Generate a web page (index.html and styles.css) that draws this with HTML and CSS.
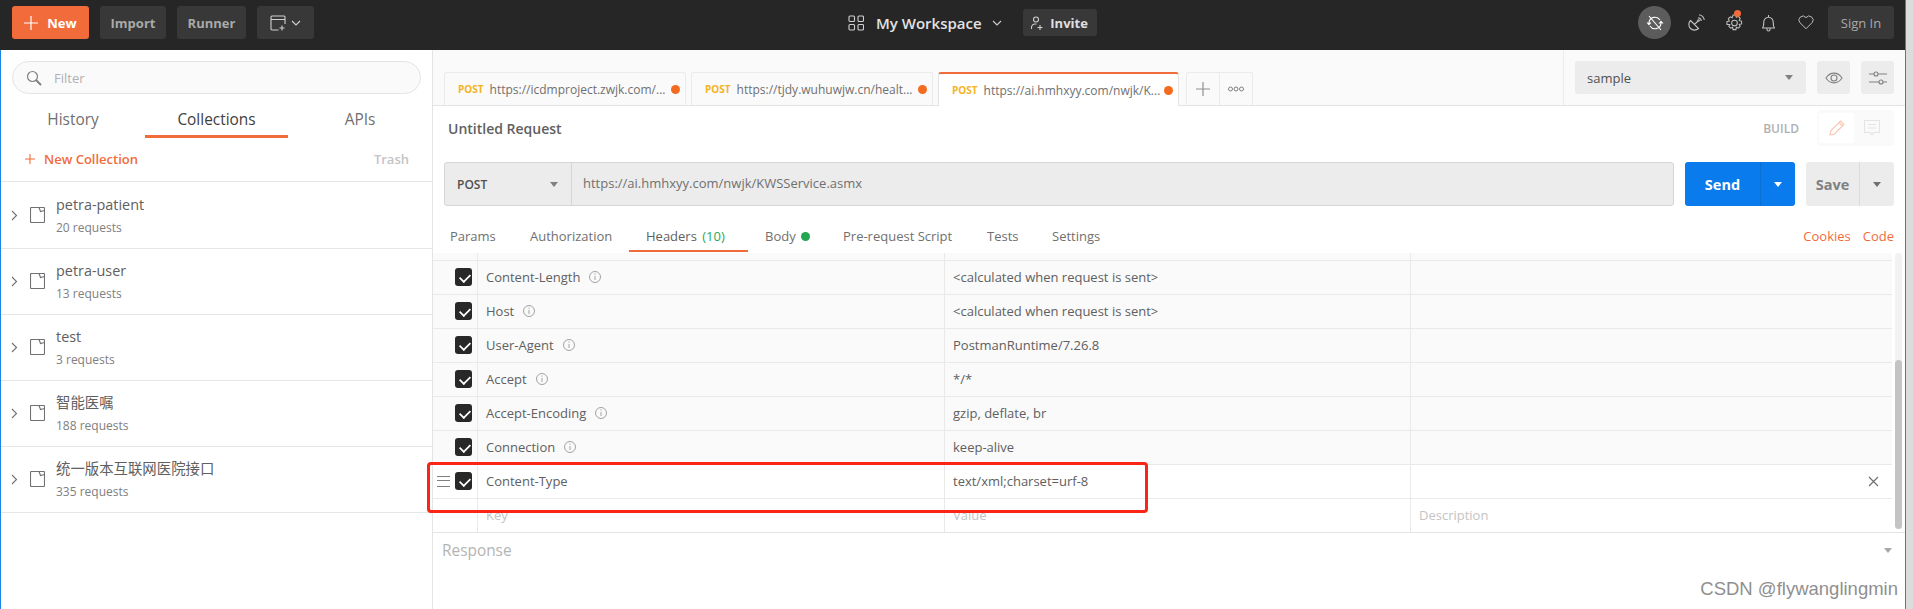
FILE: index.html
```html
<!DOCTYPE html>
<html lang="en">
<head>
<meta charset="utf-8">
<title>Postman</title>
<link rel="stylesheet" href="styles.css">
</head>
<body>
<div class="window">
  <header class="topbar">
    <div class="top-left">
      <button class="btn-new"><svg class="ic14" viewBox="0 0 14 14"><path d="M7 0v14M0 7h14"/></svg><span>New</span></button>
      <button class="btn-dark btn-import">Import</button>
      <button class="btn-dark btn-runner">Runner</button>
      <button class="btn-dark btn-win"><svg width="16" height="16" viewBox="0 0 16 16" class="ln"><path d="M8.500 15H2a1 1 0 0 1-1-1V2a1 1 0 0 1 1-1h12a1 1 0 0 1 1 1v7M1 4.500h14M12 10.500v5M9.500 13h5"/></svg><svg width="10" height="6" viewBox="0 0 10 6" class="ln"><path d="M1 1l4 4 4-4"/></svg></button>
    </div>
    <div class="top-center">
      <svg width="16" height="16" viewBox="0 0 16 16" class="ln"><rect x="1" y="1" width="5.500" height="5.500" rx="1"/><rect x="10" y="1" width="5.500" height="5.500" rx="1"/><rect x="1" y="9.500" width="5.500" height="5.500" rx="1"/><rect x="10" y="9.500" width="5.500" height="5.500" rx="1"/></svg>
      <span class="ws">My Workspace</span>
      <svg width="10" height="6" viewBox="0 0 10 6" class="ln"><path d="M1 1l4 4 4-4"/></svg>
      <button class="btn-invite"><svg width="12" height="14" viewBox="0 0 12 14" class="ln"><circle cx="5" cy="3.500" r="2.500"/><path d="M.5 13v-2a3.500 3.500 0 0 1 3-3h2M9 9v5M6.500 11.500h5"/></svg><span>Invite</span></button>
    </div>
    <div class="top-right">
      <span class="sync"><svg width="18" height="16" viewBox="0 0 18 16" class="ln2"><path d="M3 7.500A6 6 0 0 1 14 5M15 8.500A6 6 0 0 1 4 11M3 1l12 14"/><path class="solid" d="M.5 7.500h5L3 10.500zM12.500 8.500h5L15 5.500z"/></svg></span>
      <svg class="tic tic-sat" width="17" height="17" viewBox="0 0 17 17"><path d="M2.500 6.500l8 8A5.600 5.600 0 0 1 2.500 6.500zM6.500 10.500l3.500-3.500M10 3.800A3.500 3.500 0 0 1 13.300 7M11 .8A6.500 6.500 0 0 1 16.300 6"/><circle cx="10.500" cy="6.500" r=".8"/></svg>
      <span class="gear"><svg class="tic" width="17" height="18" viewBox="0 0 18 19"><path d="M7.500 1h3l.5 2.500 2-1 2 2-1 2.500 2.500.5v3l-2.500.5 1 2-2 2-2-1-.5 2.500h-3l-.5-2.500-2 1-2-2 1-2L1 11V8l2.500-.5-1-2.500 2-2 2 1z"/><circle cx="9" cy="9.500" r="3"/></svg><i class="gear-dot"></i></span>
      <svg class="tic tic-bell" width="13" height="18" viewBox="0 0 13 18"><path d="M.5 14c1.300-1.500 1.300-3 1.300-6a4.700 4.700 0 0 1 9.400 0c0 3 0 4.500 1.300 6zM6.500 1v2M5 14.500v1a1.500 1.500 0 0 0 3 0v-1"/></svg>
      <svg class="tic tic-heart" width="16" height="15" viewBox="0 0 18 16"><path d="M9 15L2 8a4.400 4.400 0 0 1 7-5.500A4.400 4.400 0 0 1 16 8z"/></svg>
      <button class="btn-dark btn-sign">Sign In</button>
    </div>
  </header>

  <div class="body">
    <aside class="sidebar">
      <div class="filter-wrap">
        <div class="filter">
          <svg width="16" height="16" viewBox="0 0 16 16" class="sv"><circle cx="6.500" cy="6.500" r="5"/><path d="M10 10l5 5" stroke-width="2"/></svg>
          <span>Filter</span>
        </div>
      </div>
      <nav class="side-tabs">
        <span class="side-tab side-tab-h">History</span>
        <span class="side-tab side-tab-c">Collections</span>
        <span class="side-tab side-tab-a">APIs</span>
      </nav>
      <div class="side-actions">
        <span class="new-coll"><svg width="10" height="10" viewBox="0 0 10 10"><path d="M5 0v10M0 5h10"/></svg>New Collection</span>
        <span class="trash">Trash</span>
      </div>
      <ul class="colls">
        <li class="coll"><svg class="chev" width="7" height="11" viewBox="0 0 7 11"><path d="M1 1l4.500 4.500L1 10"/></svg><svg class="folder" width="15" height="16" viewBox="0 0 15 16"><rect x=".5" y=".5" width="14" height="15" rx="1"/><path d="M9 .5l1.500 4 4-1"/></svg><div><div class="c-name">petra-patient</div><div class="c-sub">20 requests</div></div></li>
        <li class="coll"><svg class="chev" width="7" height="11" viewBox="0 0 7 11"><path d="M1 1l4.500 4.500L1 10"/></svg><svg class="folder" width="15" height="16" viewBox="0 0 15 16"><rect x=".5" y=".5" width="14" height="15" rx="1"/><path d="M9 .5l1.500 4 4-1"/></svg><div><div class="c-name">petra-user</div><div class="c-sub">13 requests</div></div></li>
        <li class="coll"><svg class="chev" width="7" height="11" viewBox="0 0 7 11"><path d="M1 1l4.500 4.500L1 10"/></svg><svg class="folder" width="15" height="16" viewBox="0 0 15 16"><rect x=".5" y=".5" width="14" height="15" rx="1"/><path d="M9 .5l1.500 4 4-1"/></svg><div><div class="c-name">test</div><div class="c-sub">3 requests</div></div></li>
        <li class="coll"><svg class="chev" width="7" height="11" viewBox="0 0 7 11"><path d="M1 1l4.500 4.500L1 10"/></svg><svg class="folder" width="15" height="16" viewBox="0 0 15 16"><rect x=".5" y=".5" width="14" height="15" rx="1"/><path d="M9 .5l1.500 4 4-1"/></svg><div><div class="c-name">智能医嘱</div><div class="c-sub">188 requests</div></div></li>
        <li class="coll"><svg class="chev" width="7" height="11" viewBox="0 0 7 11"><path d="M1 1l4.500 4.500L1 10"/></svg><svg class="folder" width="15" height="16" viewBox="0 0 15 16"><rect x=".5" y=".5" width="14" height="15" rx="1"/><path d="M9 .5l1.500 4 4-1"/></svg><div><div class="c-name">统一版本互联网医院接口</div><div class="c-sub">335 requests</div></div></li>
      </ul>
    </aside>

    <main class="main">
      <div class="tabbar">
        <div class="tabs">
          <div class="tab tab1"><b>POST</b><span>https://icdmproject.zwjk.com/...</span><i></i></div>
          <div class="tab tab2"><b>POST</b><span>https://tjdy.wuhuwjw.cn/healt...</span><i></i></div>
          <div class="tab tab3"><b>POST</b><span>https://ai.hmhxyy.com/nwjk/K...</span><i></i></div>
          <div class="tab-tools">
            <span class="tool-add"><svg width="14" height="14" viewBox="0 0 14 14"><path d="M7 0v14M0 7h14"/></svg></span>
            <span class="tool-more"><svg width="16" height="6" viewBox="0 0 16 6"><circle cx="2.500" cy="3" r="2"/><circle cx="8" cy="3" r="2"/><circle cx="13.500" cy="3" r="2"/></svg></span>
          </div>
        </div>
        <div class="env">
          <div class="env-select"><span>sample</span><i class="caret"></i></div>
          <span class="env-btn"><svg width="18" height="12" viewBox="0 0 18 12"><path d="M1 6c4-6.500 12-6.500 16 0-4 6.500-12 6.500-16 0z"/><circle cx="9" cy="6" r="3"/></svg></span>
          <span class="env-btn"><svg width="18" height="14" viewBox="0 0 18 14"><path d="M0 3h5M9 3h9M0 11h10M14 11h4"/><circle cx="7" cy="3" r="2"/><circle cx="12" cy="11" r="2"/></svg></span>
        </div>
      </div>

      <div class="req-head">
        <span class="req-title">Untitled Request</span>
        <div class="build">
          <span class="build-label">BUILD</span>
          <div class="build-group">
            <span class="bg-on"><svg width="16" height="16" viewBox="0 0 16 16"><path d="M1 15l1-4.500L11.500 1l3.500 3.500L5.500 14zM10 2.500L13.500 6"/></svg></span>
            <span class="bg-off"><svg width="16" height="16" viewBox="0 0 16 16"><path d="M.5.500h15v12h-6L8 15l-1.500-2.500h-6zM4 4.500h8M4 8h8"/></svg></span>
          </div>
        </div>
      </div>

      <div class="url-row">
        <div class="url-box">
          <div class="method"><span>POST</span><i class="caret"></i></div>
          <div class="url">https://ai.hmhxyy.com/nwjk/KWSService.asmx</div>
        </div>
        <div class="send"><span class="send-l">Send</span><span class="send-r"><i class="caret caret-w"></i></span></div>
        <div class="save"><span class="save-l">Save</span><span class="save-r"><i class="caret caret-d"></i></span></div>
      </div>

      <div class="req-tabs">
        <span class="rt rt-params">Params</span>
        <span class="rt rt-auth">Authorization</span>
        <span class="rt rt-on">Headers <em>(10)</em></span>
        <span class="rt rt-body">Body <i class="dot-g"></i></span>
        <span class="rt rt-pre">Pre-request Script</span>
        <span class="rt rt-tests">Tests</span>
        <span class="rt rt-set">Settings</span>
        <span class="links"><a>Cookies</a><a>Code</a></span>
      </div>

      <div class="table-wrap">
        <div class="table">
          <div class="row ro row-cut"><span class="c0"></span><span class="c1"></span><span class="c2"></span><span class="c3"></span></div>
          <div class="row ro"><span class="c0"><i class="chk"></i></span><span class="c1">Content-Length <svg class="info" viewBox="0 0 12 12"><circle cx="6" cy="6" r="5.500"/><path d="M6 5v4M6 2.500v1.200"/></svg></span><span class="c2">&lt;calculated when request is sent&gt;</span><span class="c3"></span></div>
          <div class="row ro"><span class="c0"><i class="chk"></i></span><span class="c1">Host <svg class="info" viewBox="0 0 12 12"><circle cx="6" cy="6" r="5.500"/><path d="M6 5v4M6 2.500v1.200"/></svg></span><span class="c2">&lt;calculated when request is sent&gt;</span><span class="c3"></span></div>
          <div class="row ro"><span class="c0"><i class="chk"></i></span><span class="c1">User-Agent <svg class="info" viewBox="0 0 12 12"><circle cx="6" cy="6" r="5.500"/><path d="M6 5v4M6 2.500v1.200"/></svg></span><span class="c2">PostmanRuntime/7.26.8</span><span class="c3"></span></div>
          <div class="row ro"><span class="c0"><i class="chk"></i></span><span class="c1">Accept <svg class="info" viewBox="0 0 12 12"><circle cx="6" cy="6" r="5.500"/><path d="M6 5v4M6 2.500v1.200"/></svg></span><span class="c2">*/*</span><span class="c3"></span></div>
          <div class="row ro"><span class="c0"><i class="chk"></i></span><span class="c1">Accept-Encoding <svg class="info" viewBox="0 0 12 12"><circle cx="6" cy="6" r="5.500"/><path d="M6 5v4M6 2.500v1.200"/></svg></span><span class="c2">gzip, deflate, br</span><span class="c3"></span></div>
          <div class="row ro"><span class="c0"><i class="chk"></i></span><span class="c1">Connection <svg class="info" viewBox="0 0 12 12"><circle cx="6" cy="6" r="5.500"/><path d="M6 5v4M6 2.500v1.200"/></svg></span><span class="c2">keep-alive</span><span class="c3"></span></div>
          <div class="row"><span class="c0"><span class="grip"></span><i class="chk"></i></span><span class="c1">Content-Type</span><span class="c2">text/xml;charset=urf-8</span><span class="c3"><svg class="x" width="11" height="11" viewBox="0 0 11 11"><path d="M1 1l9 9M10 1l-9 9"/></svg></span></div>
          <div class="row ph"><span class="c0"></span><span class="c1">Key</span><span class="c2">Value</span><span class="c3">Description</span></div>
        </div>
        <div class="scrollbar"><div class="track"><div class="thumb"></div></div></div>
      </div>

      <div class="response"><span>Response</span><i class="caret caret-l"></i></div>
      <div class="mark-wrap"><span class="mark">CSDN @flywanglingmin</span></div>
    </main>
  </div>
  <div class="redbox"></div>
</div>
</body>
</html>
```

FILE: styles.css
```css
* { box-sizing: border-box; }
html, body { margin: 0; padding: 0; }
body { width: 1913px; height: 609px; overflow: hidden; background: #dcdcdc; font-family: "Open Sans", "Noto Sans CJK SC", sans-serif; color: #505050; }
ul { list-style: none; margin: 0; padding: 0; }
button { font-family: inherit; border: 0; padding: 0; }
svg { display: block; flex: none; fill: none; }
.window { position: relative; width: 1906px; height: 609px; background: #fff; border-right: 1px solid #1b87e6; display: flex; flex-direction: column; }

.topbar { height: 50px; background: #262626; display: flex; align-items: center; justify-content: space-between; padding: 0 11px 5px 12px; flex: none; position: relative; }
.top-left { display: flex; align-items: center; gap: 11px; }
.btn-new { width: 77px; height: 33px; background: #f26b3a; border-radius: 3px; color: #fff; font-size: 13px; font-weight: 700; display: flex; align-items: center; justify-content: center; gap: 9px; }
.ic14 { width: 14px; height: 14px; stroke: #fff; stroke-width: 1.200; }
.btn-dark { height: 33px; background: #383838; border-radius: 3px; color: #a9a9a9; font-size: 13px; font-weight: 700; }
.btn-import { width: 66px; }
.btn-runner { width: 69px; }
.btn-win { width: 57px; display: flex; align-items: center; justify-content: center; gap: 5px; }
.ln { stroke: #d0d0d0; stroke-width: 1.100; }
.ln2 { stroke: #fff; stroke-width: 1.100; }
.solid { fill: #fff; stroke: none; }
.top-center { position: absolute; left: 848px; top: 9px; height: 27px; display: flex; align-items: center; }
.ws { color: #e2e2e2; font-size: 15px; font-weight: 600; margin: 0 10px 0 12px; }
.btn-invite { margin-left: 21px; width: 74px; height: 27px; border-radius: 3px; background: #383838; color: #e0e0e0; font-size: 13px; font-weight: 700; display: flex; align-items: center; justify-content: center; gap: 7px; }
.top-right { display: flex; align-items: center; }
.sync { width: 33px; height: 33px; border-radius: 50%; background: #5c5c5c; display: flex; align-items: center; justify-content: center; margin-right: 17px; }
.tic { stroke: #c0c0c0; stroke-width: 1.100; }
.tic-sat { margin-right: 21px; }
.tic-bell { margin-right: 23px; }
.tic-heart { margin-right: 14px; }
.gear { position: relative; margin-right: 19px; }
.gear-dot { position: absolute; top: -4px; left: 8px; width: 7px; height: 7px; border-radius: 50%; background: #f26b3a; }
.btn-sign { width: 66px; font-weight: 400; }

.body { flex: 1; display: flex; min-height: 0; }
.sidebar { width: 433px; flex: none; background: #fff; border-left: 1px solid #1b87e6; border-right: 1px solid #e4e4e4; display: flex; flex-direction: column; }
.filter-wrap { padding: 11px 11px 0 11px; }
.filter { height: 33px; border: 1px solid #e4e4e4; border-radius: 17px; background: #fafafa; display: flex; align-items: center; padding-left: 13px; gap: 12px; font-size: 13px; color: #b0b0b0; }
.sv { stroke: #808080; stroke-width: 1.200; }
.side-tabs { height: 44px; display: flex; font-size: 15.400px; color: #707070; }
.side-tab { height: 44px; padding-top: 10px; display: flex; align-items: center; justify-content: center; border-bottom: 3px solid transparent; }
.side-tab-h { width: 144px; }
.side-tab-c { width: 143px; color: #404040; border-bottom-color: #f26b3a; }
.side-tab-a { width: 144px; }
.side-actions { height: 44px; border-bottom: 1px solid #e6e6e6; display: flex; justify-content: space-between; align-items: center; padding: 0 23px 2px 24px; font-size: 13px; font-weight: 600; }
.new-coll { color: #f26b3a; display: flex; align-items: center; gap: 9px; }
.new-coll svg { stroke: #f26b3a; stroke-width: 1.100; }
.trash { color: #c4c4c4; }
.colls { padding-top: 1px; }
.coll { height: 66px; border-bottom: 1px solid #e6e6e6; display: flex; align-items: center; padding-bottom: 1px; }
.chev { margin-left: 10px; stroke: #707070; stroke-width: 1.100; }
.folder { margin-left: 12px; margin-right: 11px; stroke: #707070; stroke-width: 1.100; }
.c-name { font-size: 14.400px; line-height: 20px; color: #606060; }
.c-sub { font-size: 12px; line-height: 16px; margin-top: 5px; color: #808080; }

.main { flex: 1; min-width: 0; display: flex; flex-direction: column; position: relative; }
.tabbar { height: 56px; background: #fafafa; border-bottom: 1px solid #e4e4e4; display: flex; justify-content: space-between; flex: none; }
.tabs { display: flex; align-items: flex-end; padding-left: 11px; gap: 5px; height: 55px; }
.tab { height: 33px; width: 242px; background: #fafafa; border: 1px solid #ebebeb; border-bottom: 0; border-radius: 3px 3px 0 0; display: flex; align-items: center; padding-left: 13px; font-size: 12px; color: #707070; white-space: nowrap; position: relative; }
.tab b { color: #f5b324; font-size: 10px; font-weight: 700; margin-right: 6px; }
.tab span { flex: 1; }
.tab i { width: 9px; height: 9px; border-radius: 50%; background: #f26b1e; margin-right: 5px; }
.tab3 { background: #fff; border-top: 2px solid #f26b3a; border-color: #f26b3a #e4e4e4 #fff; margin-bottom: -1px; height: 34px; width: 241px; }
.tab-tools { display: flex; height: 33px; border: 1px solid #ebebeb; border-bottom: 0; border-radius: 3px 3px 0 0; margin-left: 2px; }
.tool-add, .tool-more { display: flex; align-items: center; justify-content: center; }
.tool-add { width: 33px; border-right: 1px solid #ebebeb; }
.tool-add svg { stroke: #909090; stroke-width: 1.200; }
.tool-more { width: 32px; }
.tool-more svg { stroke: #808080; stroke-width: 1; }
.env { width: 342px; flex: none; border-left: 1px solid #ececec; display: flex; align-items: flex-start; padding: 11px 0 0 11px; gap: 11px; }
.env-select { width: 231px; height: 33px; background: #ececec; border-radius: 3px; display: flex; align-items: center; justify-content: space-between; padding: 0 13px 0 12px; font-size: 13px; color: #505050; }
.env-btn { width: 33px; height: 33px; background: #ececec; border-radius: 3px; display: flex; align-items: center; justify-content: center; }
.env-btn svg { stroke: #808080; stroke-width: 1.100; }
.caret { display: block; width: 0; height: 0; border-left: 4.500px solid transparent; border-right: 4.500px solid transparent; border-top: 5px solid #808080; }
.caret-w { border-top-color: #fff; }
.caret-d { border-top-color: #707070; }
.caret-l { border-top-color: #a8a8a8; }

.req-head { height: 56px; display: flex; align-items: flex-start; justify-content: space-between; padding: 4px 11px 0 15px; flex: none; }
.req-title { font-size: 14px; font-weight: 600; line-height: 38px; color: #606060; }
.build { display: flex; align-items: center; }
.build-label { font-size: 12px; font-weight: 600; color: #b0b0b0; margin-right: 18px; }
.build-group { width: 77px; height: 36px; background: #fafafa; border-radius: 3px; display: flex; align-items: center; padding: 3px 2px; }
.bg-on, .bg-off { width: 35px; height: 30px; border-radius: 3px; display: flex; align-items: center; justify-content: center; }
.bg-on { background: #fff; }
.bg-on svg { stroke: #fac6b2; stroke-width: 1.100; }
.bg-off svg { stroke: #e4e4e4; stroke-width: 1.100; }

.url-row { height: 44px; display: flex; padding: 0 11px; gap: 11px; flex: none; }
.url-box { flex: 1; display: flex; background: #ececec; border: 1px solid #d6d6d6; border-radius: 3px; }
.method { width: 127px; border-right: 1px solid #d6d6d6; display: flex; align-items: center; justify-content: space-between; padding: 0 12px; font-size: 12px; font-weight: 600; color: #505050; }
.method .caret { margin-right: 1px; }
.url { flex: 1; line-height: 40px; padding-left: 11px; font-size: 13px; color: #707070; }
.send { width: 110px; background: #097bed; border-radius: 3px; display: flex; color: #fff; font-size: 14.500px; font-weight: 700; }
.send-l { width: 76px; display: flex; align-items: center; justify-content: center; border-right: 1px solid #0a6fd4; }
.send-r { flex: 1; display: flex; align-items: center; justify-content: center; }
.save { width: 88px; background: #ececec; border-radius: 3px; display: flex; color: #808080; font-size: 14.500px; font-weight: 700; }
.save-l { width: 54px; display: flex; align-items: center; justify-content: center; border-right: 1px solid #dcdcdc; }
.save-r { flex: 1; display: flex; align-items: center; justify-content: center; }

.req-tabs { height: 47px; display: flex; font-size: 13px; color: #707070; flex: none; position: relative; }
.rt { position: absolute; top: 20px; line-height: 20px; white-space: nowrap; }
.rt-params { left: 17px; }
.rt-auth { left: 97px; }
.rt-on { left: 196px; width: 119px; height: 26px; padding-left: 17px; color: #606060; border-bottom: 2px solid #f26b3a; }
.rt-on em { font-style: normal; color: #2ba85a; margin-left: 2px; }
.rt-body { left: 332px; display: flex; align-items: center; gap: 5px; }
.dot-g { width: 9px; height: 9px; border-radius: 50%; background: #26a650; }
.rt-pre { left: 410px; }
.rt-tests { left: 554px; }
.rt-set { left: 619px; }
.links { position: absolute; right: 11px; top: 20px; line-height: 20px; display: flex; gap: 12px; color: #f26b3a; }

.table-wrap { height: 280px; display: flex; flex: none; border-bottom: 1px solid #e4e4e4; }
.table { flex: 1; min-width: 0; overflow: hidden; }
.scrollbar { width: 13px; padding: 0 3px; background: #fff; }
.track { height: 276px; background: #f2f2f2; border-radius: 4px; }
.thumb { width: 7px; height: 169px; position: relative; top: 107px; background: #c4c4c4; border-radius: 4px; }
.row { height: 34px; display: flex; border-bottom: 1px solid #e9e9e9; font-size: 13px; color: #606060; }
.row-cut { height: 8px; }
.row:last-child { border-bottom: 0; }
.ro { background: #fafafa; }
.ph { color: #c4c4c4; }
.row > span { display: flex; align-items: center; border-right: 1px solid #e9e9e9; padding-bottom: 2px; }
.row > .c0 { padding-bottom: 1px; }
.row > span:last-child { border-right: 0; }
.row-cut > span { padding-bottom: 0; }
.c0 { width: 45px; justify-content: flex-end; padding-right: 5px; gap: 5px; }
.c1 { width: 467px; padding-left: 8px; gap: 4px; }
.c2 { width: 466px; padding-left: 8px; }
.c3 { flex: 1; padding-left: 8px; justify-content: space-between; position: relative; }
.chk { display: block; width: 17px; height: 18px; border-radius: 3px; background: #282828; position: relative; }
.chk::after { content: ""; position: absolute; left: 5.500px; top: 3px; width: 6px; height: 10px; border: solid #fff; border-width: 0 2.500px 2.500px 0; transform: rotate(45deg) scale(.85); }
.info { width: 12px; height: 12px; margin-left: 5px; stroke: #999; stroke-width: .9; }
.grip { display: block; width: 13px; height: 11px; border-top: 1.500px solid #808080; border-bottom: 1.500px solid #808080; position: relative; }
.grip::after { content: ""; position: absolute; left: 0; right: 0; top: 3.300px; border-top: 1.500px solid #808080; }
.x { position: absolute; right: 13px; top: 11px; stroke: #707070; stroke-width: 1.200; }

.response { height: 35px; display: flex; align-items: center; justify-content: space-between; padding: 0 13px 0 9px; font-size: 15.400px; color: #b4b4b4; flex: none; }
.mark-wrap { display: flex; justify-content: flex-end; padding: 10px 7px 0 0; }
.mark { font-family: "Liberation Sans", sans-serif; font-size: 18.500px; color: #8f8f8f; line-height: 22px; }
.redbox { position: absolute; left: 427px; top: 462px; width: 721px; height: 51px; border: 3px solid #fa2417; border-radius: 4px; pointer-events: none; }
```
